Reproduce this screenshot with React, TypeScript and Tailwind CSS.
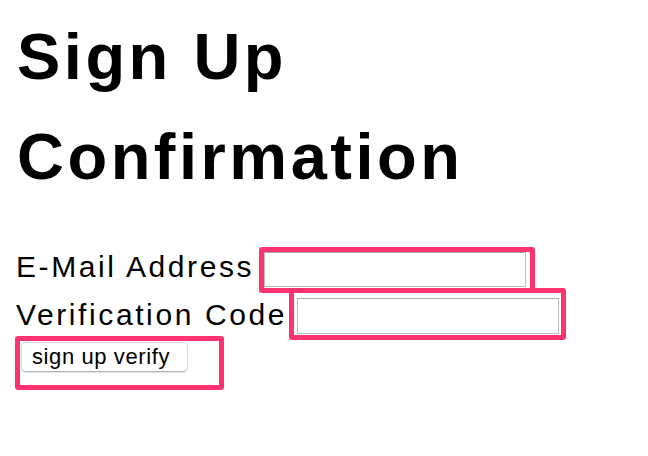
import React from 'react';

// Pink callout drawn over a form control (annotation layer)
const Mark: React.FC<{ className: string }> = ({ className }) => (
  <span className={`pointer-events-none absolute rounded-[3px] border-[5px] border-[#ff3370] ${className}`} />
);

const labelCls = 'text-[30px] leading-[48px] tracking-[2.6px] whitespace-nowrap';

const inputCls =
  'block h-[35px] w-[262px] border border-[#bdbdbd] border-t-[#a9a9a9] bg-white outline-none';

export default function App() {
  return (
    <div
      className="min-h-[456px] w-[648px] bg-white px-4 text-black"
      style={{ fontFamily: '"Liberation Sans", Arial, sans-serif' }}
    >
      <h1 className="mt-[7px] mb-[36px] ml-[1px] text-[65px] font-bold leading-[100px] tracking-[3.5px]">
        Sign Up
        <br />
        Confirmation
      </h1>

      <form className="flex flex-col" onSubmit={e => e.preventDefault()}>
        <div className="flex h-[48px] items-start">
          <label className={labelCls}>E-Mail Address</label>
          <div className="relative ml-[10px] mt-[9px]">
            <input type="email" className={inputCls} />
            <Mark className="-top-[5px] -left-[5px] -right-[9px] -bottom-[6px]" />
          </div>
        </div>

        <div className="flex h-[48px] items-start">
          <label className={labelCls}>Verification Code</label>
          <div className="relative ml-[10px] mt-[7px]">
            <input type="text" className={`${inputCls} h-[36px]`} />
            <Mark className="-top-[10px] -left-[8px] -right-[7px] -bottom-[6px]" />
          </div>
        </div>

        <div className="relative ml-[5px] mt-[3px] self-start">
          <button
            type="submit"
            className="block h-[30px] w-[167px] rounded-[5px] border border-[#dadada] border-b-[#b3b3b3] bg-white pl-[10px] text-left text-[22px] leading-[28px] tracking-[0.6px] shadow-[0_1px_1px_rgba(0,0,0,0.12)]"
          >
            sign up verify
          </button>
          <Mark className="-top-[6px] -left-[6px] -right-[36px] -bottom-[18px]" />
        </div>
      </form>
    </div>
  );
}
